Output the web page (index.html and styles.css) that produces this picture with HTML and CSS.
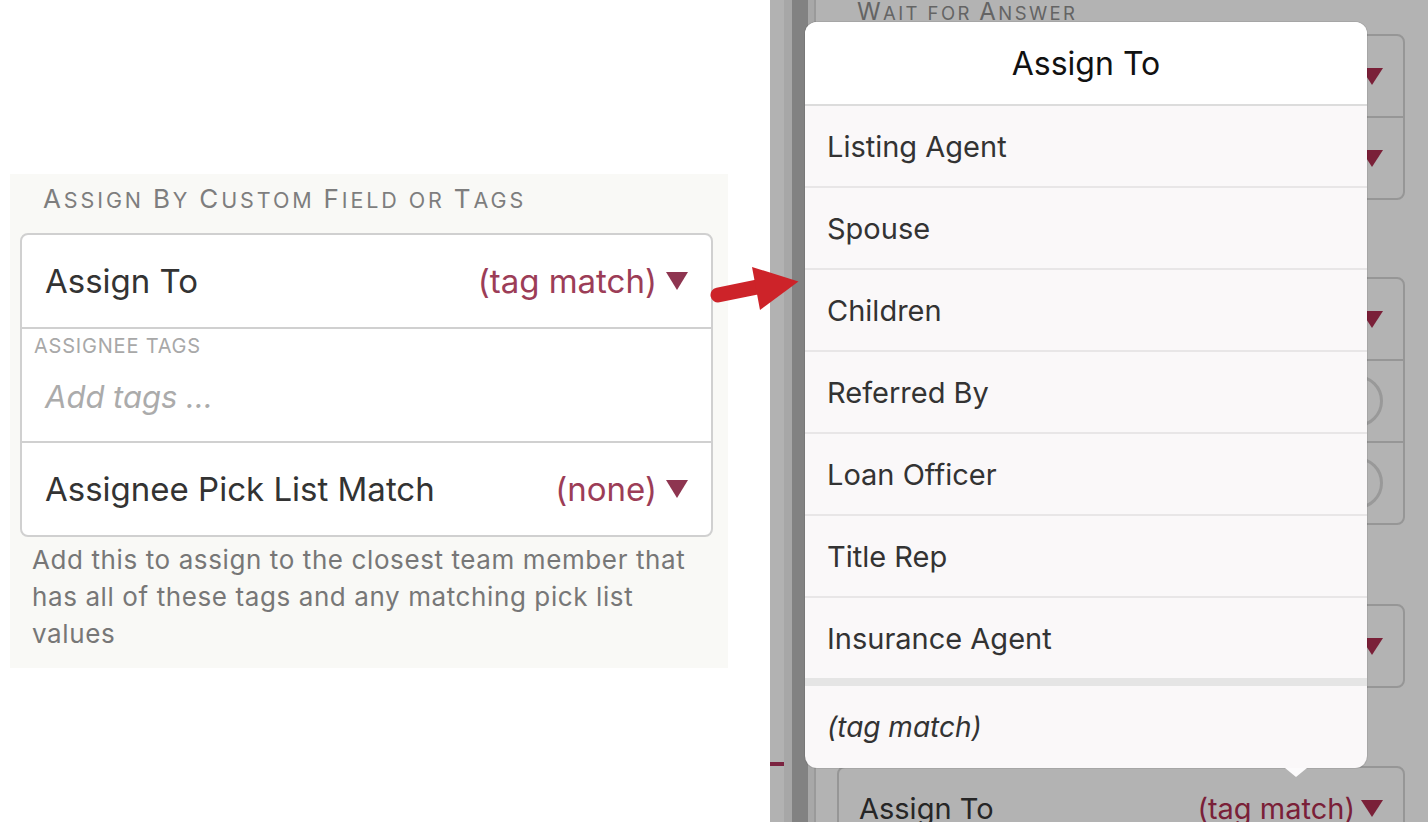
FILE: index.html
```html
<!DOCTYPE html>
<html lang="en">
<head>
<meta charset="utf-8">
<title>Assign To</title>
<link rel="stylesheet" href="styles.css">
</head>
<body>
<div class="page">
  <div class="left">
    <section class="panel">
      <h2 class="panel-title"><span class="sc">Assign</span> <span class="sc">By</span> <span class="sc">Custom</span> <span class="sc">Field</span> <span class="sc sc-plain">or</span> <span class="sc">Tags</span></h2>
      <div class="card">
        <div class="row">
          <span class="label">Assign To</span>
          <span class="value">(tag match)<span class="tri"></span></span>
        </div>
        <div class="tags">
          <div class="tags-label">ASSIGNEE TAGS</div>
          <div class="tags-input">Add tags ...</div>
        </div>
        <div class="row row-last">
          <span class="label">Assignee Pick List Match</span>
          <span class="value">(none)<span class="tri"></span></span>
        </div>
      </div>
      <p class="help">Add this to assign to the closest team member that has all of these tags and any matching pick list values</p>
    </section>
  </div>

  <div class="right">
    <div class="strip strip-a"><div class="mark"></div></div>
    <div class="strip strip-b"></div>
    <div class="strip strip-c"></div>
    <div class="strip strip-d"></div>
    <div class="strip strip-e"></div>
    <div class="bg-main">
      <h3 class="bg-title"><span class="sc">Wait</span> <span class="sc sc-plain">for</span> <span class="sc">Answer</span></h3>
      <div class="bcard bcard-1">
        <div class="brow"><span></span><span class="btri"></span></div>
        <div class="brow"><span></span><span class="btri"></span></div>
      </div>
      <div class="bcard bcard-2">
        <div class="brow"><span></span><span class="btri"></span></div>
        <div class="brow"><span></span><span class="bcircle"></span></div>
        <div class="brow"><span></span><span class="bcircle"></span></div>
      </div>
      <div class="bcard bcard-3">
        <div class="brow"><span></span><span class="btri"></span></div>
      </div>
      <div class="bcard bcard-4">
        <div class="brow"><span class="blabel">Assign To</span><span class="bvalue">(tag match)<span class="btri"></span></span></div>
      </div>
    </div>

    <div class="popover">
      <div class="pop-head">Assign To</div>
      <div class="pop-item">Listing Agent</div>
      <div class="pop-item">Spouse</div>
      <div class="pop-item">Children</div>
      <div class="pop-item">Referred By</div>
      <div class="pop-item">Loan Officer</div>
      <div class="pop-item">Title Rep</div>
      <div class="pop-item pop-sep">Insurance Agent</div>
      <div class="pop-item pop-last">(tag match)</div>
    </div>
  </div>
</div>

<svg class="callout" width="110" height="65" viewBox="0 0 110 65" aria-hidden="true">
  <line x1="18" y1="40" x2="72" y2="29" stroke="#cd2329" stroke-width="15" stroke-linecap="round"/>
  <polygon points="52,12 98.5,26.5 60,55" fill="#cd2329"/>
</svg>
</body>
</html>
```

FILE: styles.css
```css
* { box-sizing: border-box; }
html, body { margin: 0; padding: 0; }
body {
  width: 1428px;
  height: 822px;
  overflow: hidden;
  background: #fff;
  font-family: Inter, "Noto Sans", sans-serif;
  position: relative;
}
.page { display: flex; height: 822px; }

/* small-caps headings: large initial, smaller capitals */
.sc { display: inline-block; }

/* ---------- left panel ---------- */
.left { width: 770px; flex: none; padding: 174px 0 0 10px; background: #fff; }
.panel {
  width: 718px;
  height: 494px;
  background: #f9f9f6;
  padding: 12px 15px 0 10px;
}
.panel-title {
  margin: 0 0 20px 23px;
  font-size: 21.5px;
  line-height: 26px;
  font-weight: 400;
  text-transform: uppercase;
  letter-spacing: 2.9px;
  color: #7e7e7e;
}
.panel-title .sc::first-letter { font-size: 26px; }
.panel-title .sc-plain::first-letter { font-size: 21.5px; }
.card {
  background: #fff;
  border: 2px solid #d0d0d0;
  border-radius: 8px;
}
.row {
  height: 94px;
  border-bottom: 2px solid #d0d0d0;
  display: flex;
  align-items: center;
  justify-content: space-between;
  padding: 0 23px;
  font-size: 33px;
  color: #333;
}
.row-last { height: 92px; border-bottom: 0; }
.value { color: #9c3d57; display: flex; align-items: center; gap: 9px; }
.tri {
  width: 0; height: 0;
  border-left: 11.5px solid transparent;
  border-right: 11.5px solid transparent;
  border-top: 18px solid #8e3550;
}
.tags {
  height: 114px;
  border-bottom: 2px solid #d0d0d0;
  padding: 6px 0 0 12px;
}
.tags-label { font-size: 20px; line-height: 22px; letter-spacing: 0.8px; color: #a8a8a8; }
.tags-input {
  margin: 20px 0 0 11px;
  font-size: 31px;
  line-height: 40px;
  font-style: italic;
  color: #ababab;
}
.help {
  margin: 4px 0 0 12px;
  width: 668px;
  font-size: 26px;
  line-height: 37px;
  letter-spacing: 0.6px;
  color: #777;
}

/* ---------- dimmed background on the right ---------- */
.right { flex: 1; display: flex; position: relative; background: #b3b3b3; }
.strip { flex: none; height: 822px; }
.strip-a { width: 14px; background: #b2b2b2; padding-top: 762px; }
.mark { height: 4px; background: #7b2340; }
.strip-b { width: 8px; background: #a7a7a7; }
.strip-c { width: 16px; background: #828282; }
.strip-d { width: 6px; background: #a8a8a8; }
.strip-e { width: 2px; background: #9a9a9a; }
.bg-main { flex: 1; padding: 0 23px 0 21px; }
.bg-title {
  margin: -1px 0 0 20px;
  font-size: 18.5px;
  line-height: 26px;
  font-weight: 400;
  text-transform: uppercase;
  letter-spacing: 2.4px;
  color: #646464;
}
.bg-title .sc::first-letter { font-size: 24px; }
.bg-title .sc-plain::first-letter { font-size: 18.5px; }
.bcard { border: 2px solid #969696; border-radius: 8px; }
.bcard-1 { margin-top: 8px; }
.bcard-2 { margin-top: 77px; }
.bcard-3 { margin-top: 79px; }
.bcard-4 { margin-top: 78px; }
.brow {
  height: 80px;
  display: flex;
  align-items: center;
  justify-content: space-between;
  padding: 0 20px;
  font-size: 29px;
  color: #262626;
}
.brow + .brow { height: 82px; border-top: 2px solid #969696; }
.bvalue { color: #7a2038; display: flex; align-items: center; gap: 6px; }
.btri {
  width: 0; height: 0;
  border-left: 11px solid transparent;
  border-right: 11px solid transparent;
  border-top: 17px solid #7a2038;
}
.bcircle {
  width: 52px; height: 52px;
  border: 3px solid #999;
  border-radius: 50%;
}

/* ---------- popover ---------- */
.popover {
  position: absolute;
  left: 35px;
  top: 22px;
  width: 562px;
  height: 746px;
  background: #faf8f9;
  border-radius: 12px;
  box-shadow: 0 0 0 1px rgba(0, 0, 0, 0.07);
}
.popover::after {
  content: "";
  position: absolute;
  left: 480px;
  top: 100%;
  border-left: 11px solid transparent;
  border-right: 11px solid transparent;
  border-top: 9px solid #fcfbfc;
}
.pop-head {
  height: 84px;
  border-bottom: 2px solid #dcdcdc;
  background: #fff;
  border-radius: 12px 12px 0 0;
  display: flex;
  align-items: center;
  justify-content: center;
  font-size: 32px;
  color: #111;
}
.pop-item {
  height: 82px;
  border-bottom: 2px solid #e8e6e7;
  padding-left: 22px;
  display: flex;
  align-items: center;
  font-size: 29px;
  color: #333;
}
.pop-sep { height: 88px; border-bottom: 8px solid #e5e5e5; }
.pop-last { border-bottom: 0; font-size: 28px; font-style: italic; border-radius: 0 0 12px 12px; }

/* ---------- annotation arrow ---------- */
.callout { position: absolute; left: 700px; top: 255px; }
```
